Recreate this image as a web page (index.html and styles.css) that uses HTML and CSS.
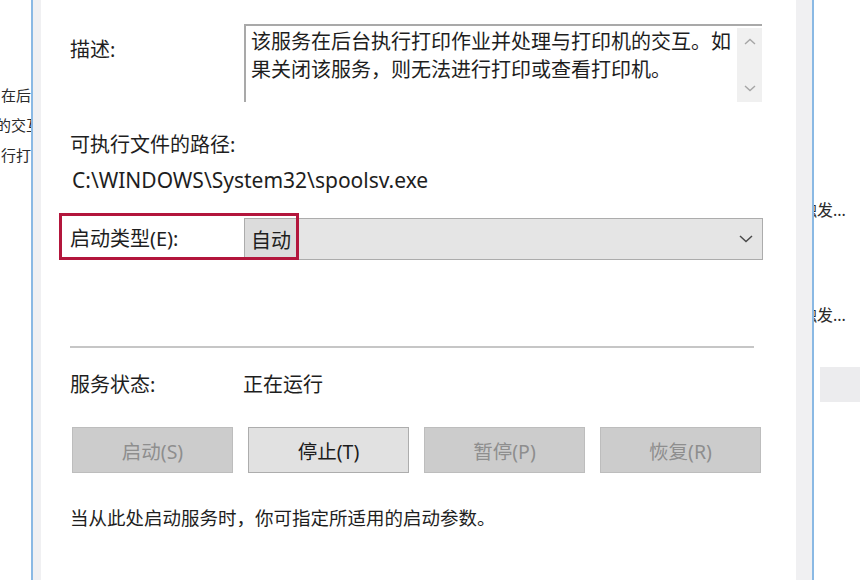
FILE: index.html
```html
<!DOCTYPE html>
<html lang="zh-CN">
<head>
    <meta charset="UTF-8">
    <title>Print Spooler 的属性</title>
    <link rel="stylesheet" href="styles.css">
</head>
<body>
    <div class="desk">
        <div class="behind behind-left">
            <p>在后台</p>
            <p class="shift">的交互</p>
            <p>行打印</p>
        </div>

        <div class="window">
            <div class="page">
                <div class="row row-desc">
                    <span class="label">描述:</span>
                    <div class="descbox">
                        <p class="desc-text">
                            <span>该服务在后台执行打印作业并处理与打印机的交互。如</span>
                            <span>果关闭该服务，则无法进行打印或查看打印机。</span>
                        </p>
                        <div class="vscroll">
                            <svg width="12" height="7" viewBox="0 0 12 7"><path d="M1 6 L6 1.5 L11 6" fill="none" stroke="#a6a6a6" stroke-width="1.4"/></svg>
                            <svg width="12" height="7" viewBox="0 0 12 7"><path d="M1 1 L6 5.5 L11 1" fill="none" stroke="#a6a6a6" stroke-width="1.4"/></svg>
                        </div>
                    </div>
                </div>

                <div class="path-block">
                    <div class="label">可执行文件的路径:</div>
                    <div class="path">C:\WINDOWS\System32\spoolsv.exe</div>
                </div>

                <div class="row row-start">
                    <span class="label">启动类型(E):</span>
                    <div class="combo">
                        <span class="combo-value">自动</span>
                        <svg width="14" height="8" viewBox="0 0 14 8"><path d="M1 1 L7 6.5 L13 1" fill="none" stroke="#4a4a4a" stroke-width="1.5"/></svg>
                    </div>
                    <div class="mark"></div>
                </div>

                <div class="sep"></div>

                <div class="row row-status">
                    <span class="label">服务状态:</span>
                    <span class="label">正在运行</span>
                </div>

                <div class="buttons">
                    <button class="btn" disabled>启动(S)</button>
                    <button class="btn active">停止(T)</button>
                    <button class="btn" disabled>暂停(P)</button>
                    <button class="btn" disabled>恢复(R)</button>
                </div>

                <p class="hint">当从此处启动服务时，你可指定所适用的启动参数。</p>
            </div>
        </div>

        <div class="behind behind-right">
            <p class="r1">触发...</p>
            <p class="r2">触发...</p>
            <div class="selbar"></div>
        </div>
    </div>
</body>
</html>
```

FILE: styles.css
```css
body {
    margin: 0;
    background: #fff;
    color: #1e1e1e;
    font-family: "Noto Sans", "Noto Sans CJK SC", sans-serif;
}

p {
    margin: 0;
}

.desk {
    display: flex;
    height: 580px;
    overflow: hidden;
}

/* windows behind the dialog */
.behind {
    overflow: hidden;
    white-space: nowrap;
    color: #2a2a2a;
}

.behind-left {
    width: 31px;
    flex: none;
    padding-top: 80px;
    line-height: 30px;
    font-size: 15px;
}

.behind-left p {
    padding-left: 1px;
}

.behind-left .shift {
    margin-left: -5px;
}

.behind-right {
    flex: 1;
    line-height: 28px;
    font-size: 16px;
}

.behind-right p {
    margin-left: -13px;
}

.behind-right .r1 {
    margin-top: 196px;
}

.behind-right .r2 {
    margin-top: 77px;
}

.selbar {
    margin: 38px 0 0 6px;
    height: 35px;
    background: #ececee;
}

/* dialog */
.window {
    width: 783px;
    flex: none;
    box-sizing: border-box;
    border-left: 2px solid #8ab9e4;
    border-right: 2px solid #8ab9e4;
    background: #f0f0f2;
    padding: 0 16px 0 8px;
}

.page {
    background: #fff;
    height: 100%;
    box-sizing: border-box;
    padding: 24px 33px 0 29px;
    font-size: 20px;
}

.label {
    line-height: 28px;
}

.row {
    display: grid;
    grid-template-columns: 174px 1fr;
    position: relative;
}

.row-desc .label {
    margin-top: 12px;
}

.descbox {
    display: flex;
    height: 78px;
    box-sizing: border-box;
    border-top: 2px solid #a9a9a9;
    border-left: 2px solid #a9a9a9;
    margin-right: 1px;
}

.desc-text {
    flex: 1;
    padding: 2px 0 0 5px;
    font-size: 20px;
    line-height: 28px;
    white-space: nowrap;
    overflow: hidden;
}

.desc-text span {
    display: block;
}

.vscroll {
    width: 25px;
    margin-top: 2px;
    background: #f0f0f0;
    display: flex;
    flex-direction: column;
    align-items: center;
    justify-content: space-between;
    padding: 10px 0 10px;
}

.path-block {
    margin-top: 29px;
    line-height: 28px;
}

.path {
    margin: 7px 0 0 2px;
    font-size: 21px;
}

.row-start {
    margin-top: 24px;
}

.row-start .label {
    line-height: 42px;
}

.combo {
    height: 42px;
    box-sizing: border-box;
    border: 1px solid #acacac;
    background: #e5e5e5;
    display: flex;
    align-items: center;
    justify-content: space-between;
    padding-right: 9px;
}

.combo-value {
    height: 100%;
    display: flex;
    align-items: center;
    padding: 0 6px 0 6px;
    background: #dcdcdc;
    font-size: 20px;
}

/* red highlight drawn over the row */
.mark {
    position: absolute;
    left: -11px;
    top: -5px;
    width: 240px;
    height: 47px;
    box-sizing: border-box;
    border: 3px solid #b3163c;
}

.sep {
    margin-top: 86px;
    width: 684px;
    height: 2px;
    background: #c6c6c6;
}

.row-status {
    margin-top: 23px;
    grid-template-columns: 173px 1fr;
}

.buttons {
    margin: 28px 0 0 2px;
    display: grid;
    grid-template-columns: repeat(4, 1fr);
    column-gap: 15px;
    width: 689px;
}

.btn {
    height: 46px;
    font-family: inherit;
    font-size: 19.5px;
    border: 1px solid #bdbdbd;
    background: #cccccc;
    color: #8e8e8e;
}

.btn.active {
    background: #e1e1e1;
    border-color: #adadad;
    color: #1c1c1c;
}

.hint {
    margin-top: 31px;
    line-height: 28px;
    font-size: 18.5px;
}
```
